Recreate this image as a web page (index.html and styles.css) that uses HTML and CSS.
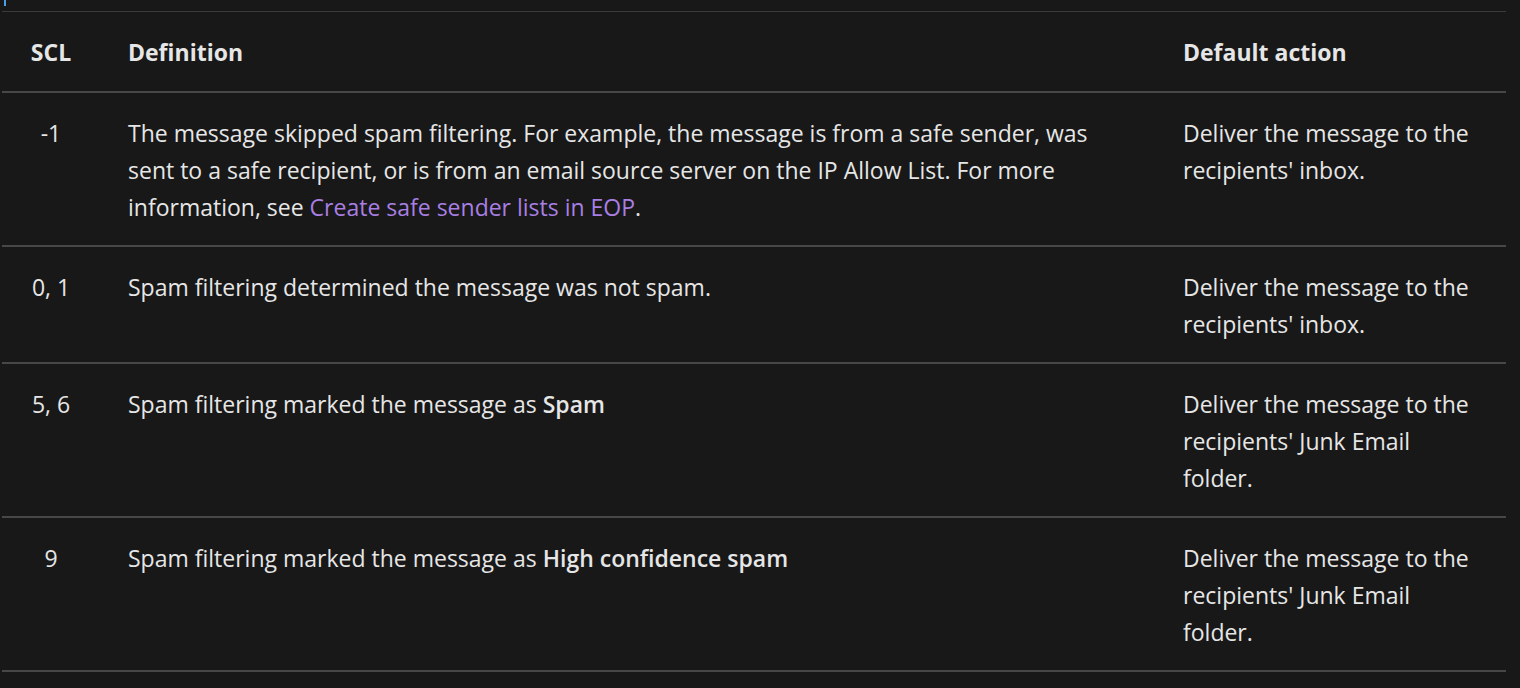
FILE: index.html
```html
<!DOCTYPE html>
<html lang="en">
<head>
<meta charset="utf-8">
<title>SCL table</title>
<link rel="stylesheet" href="styles.css">
</head>
<body>
<div class="page">
  <span class="focus-mark"></span>
  <table class="scl-table">
    <colgroup>
      <col class="col-scl">
      <col class="col-def">
      <col class="col-act">
    </colgroup>
    <thead>
      <tr>
        <th class="c-scl">SCL</th>
        <th>Definition</th>
        <th>Default action</th>
      </tr>
    </thead>
    <tbody>
      <tr>
        <td class="c-scl">-1</td>
        <td>The message skipped spam filtering. For example, the message is from a safe sender, was sent to a safe recipient, or is from an email source server on the IP Allow List. For more information, see <a href="#" class="link">Create safe sender lists in EOP</a>.</td>
        <td>Deliver the message to the recipients' inbox.</td>
      </tr>
      <tr>
        <td class="c-scl">0, 1</td>
        <td>Spam filtering determined the message was not spam.</td>
        <td>Deliver the message to the recipients' inbox.</td>
      </tr>
      <tr>
        <td class="c-scl">5, 6</td>
        <td>Spam filtering marked the message as <strong>Spam</strong></td>
        <td>Deliver the message to the recipients' Junk Email folder.</td>
      </tr>
      <tr>
        <td class="c-scl">9</td>
        <td>Spam filtering marked the message as <strong>High confidence spam</strong></td>
        <td>Deliver the message to the recipients' Junk Email folder.</td>
      </tr>
    </tbody>
  </table>
</div>
</body>
</html>
```
FILE: styles.css
```css
html, body {
  margin: 0;
  padding: 0;
  background: #181818;
}
body {
  font-family: "Open Sans", "Noto Sans", sans-serif;
  font-size: 23px;
  line-height: 37px;
  color: #e6e6e6;
}
.page {
  position: relative;
  padding: 11px 14px 0 2px;
}
.focus-mark {
  position: absolute;
  left: 4px;
  top: 0;
  width: 2px;
  height: 6px;
  background: #4a9fe6;
}
.scl-table {
  width: 100%;
  border-collapse: collapse;
  table-layout: fixed;
  border-top: 1px solid #3a3a3a;
}
.col-scl { width: 98px; }
.col-def { width: 1055px; }
.col-act { width: auto; }
th, td {
  text-align: left;
  vertical-align: top;
  padding: 22px 28px 19px 28px;
}
th {
  font-weight: 700;
  padding-bottom: 20px;
  border-bottom: 2px solid #474747;
}
td {
  border-bottom: 2px solid #474747;
}
.c-scl {
  text-align: center;
  padding-left: 18px;
  padding-right: 18px;
}
strong {
  font-weight: 600;
}
.link {
  color: #a87fe2;
  text-decoration: none;
}
```
